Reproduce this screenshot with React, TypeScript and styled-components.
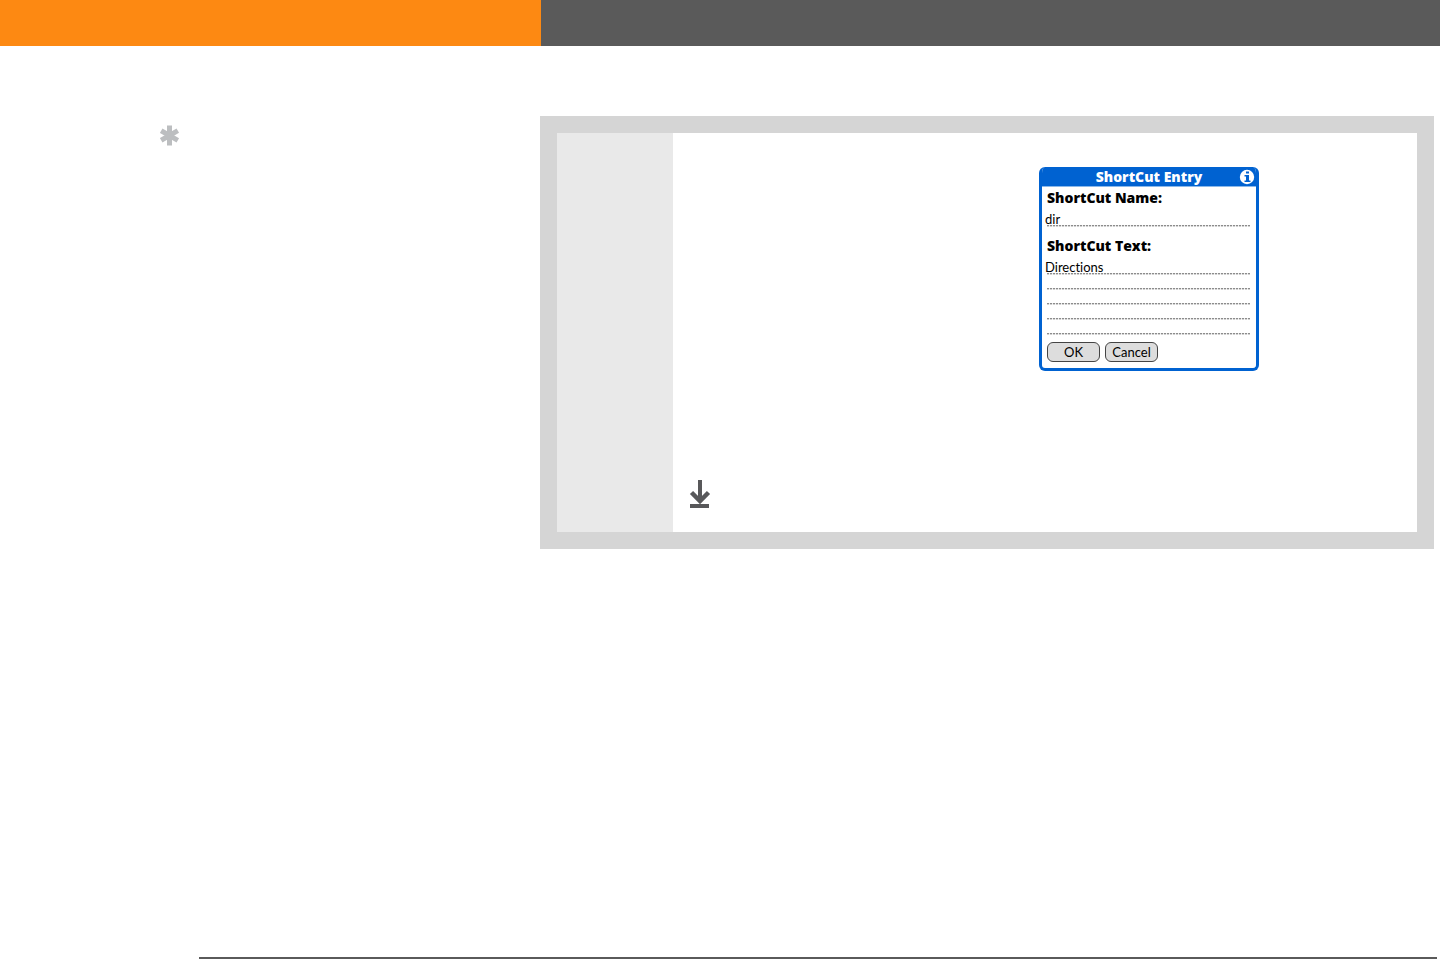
import React from "react";
import styled, { createGlobalStyle, css } from "styled-components";

const GlobalStyle = createGlobalStyle`
  *, *::before, *::after { box-sizing: border-box; }
  body { margin: 0; background: #fff; font-family: "Open Sans", "Noto Sans", sans-serif; }
`;

const Page = styled.div`
  display: flex;
  flex-direction: column;
  min-height: 100vh;
`;

const columns = css`
  display: grid;
  grid-template-columns: 541fr 899fr;
`;

const Banner = styled.header`
  ${columns}
  height: 46px;
`;

const BannerPart = styled.div<{ $color: string }>`
  background: ${(p) => p.$color};
`;

const Content = styled.main`
  ${columns}
  flex: 1;
  align-items: start;
  padding-top: 70px;
`;

const Margin = styled.aside`
  display: flex;
  justify-content: flex-end;
  padding: 9px 361px 0 0;
`;

const Panel = styled.section`
  display: grid;
  grid-template-columns: 116px 1fr;
  margin: 0 6px 0 -1px;
  border: 17px solid #d5d5d5;
`;

const StepColumn = styled.div`
  background: #e9e9e9;
`;

const StepBody = styled.div`
  display: flex;
  flex-direction: column;
  justify-content: space-between;
  min-height: 399px;
  padding: 34px 16px 24px;
`;

const Dialog = styled.form`
  align-self: flex-end;
  width: 220px;
  margin-right: 142px;
  border: 3px solid #0062d1;
  border-top-width: 0;
  border-radius: 6px;
  overflow: hidden;
  background: #fff;
  color: #000;
`;

const TitleBar = styled.div`
  display: grid;
  grid-template-columns: 16px 1fr 16px;
  align-items: center;
  height: 20px;
  padding: 0 1px;
  border-bottom: 1px solid #8ab8ea;
  background: #0062d1;
  color: #fff;
`;

const Title = styled.h1`
  margin: 0;
  font-size: 14px;
  font-weight: 800;
  line-height: 20px;
  text-align: center;
  white-space: nowrap;
`;

const InfoButton = styled.button`
  display: flex;
  width: 16px;
  height: 16px;
  padding: 0;
  border: 0;
  background: none;
`;

const Fields = styled.div`
  display: flex;
  flex-direction: column;
  padding: 2px 6px 6px 2px;
`;

const Label = styled.label`
  padding-left: 3px;
  font-size: 14px;
  font-weight: 800;
  line-height: 18px;
`;

const entry = css`
  display: block;
  width: 100%;
  padding: 0 0 0 1px;
  border: 0;
  outline: 0;
  border-radius: 0;
  resize: none;
  overflow: hidden;
  color: #000;
  font-family: Lato, sans-serif;
  font-size: 13px;
  font-variant-ligatures: none;
  background-image:
    linear-gradient(90deg, #fff 3px, transparent 3px),
    repeating-linear-gradient(#fff 0 13px, transparent 13px 14px, #fff9 14px 15px),
    repeating-linear-gradient(90deg, #8c8c8c 0 2px, #eee 2px 3px);
`;

const TextInput = styled.input`
  ${entry}
  height: 15px;
  margin: 5px 0 10px;
  line-height: 15px;
`;

const TextArea = styled.textarea`
  ${entry}
  height: 75px;
  margin: 5px 0 7px;
  line-height: 15px;
`;

const Actions = styled.div`
  display: flex;
  gap: 5px;
  padding-left: 3px;
`;

const ActionButton = styled.button`
  width: 53px;
  height: 20px;
  padding: 0;
  border: 1px solid #444;
  border-radius: 6px;
  background: #ddd;
  color: #000;
  font-family: Lato, sans-serif;
  font-size: 13px;
  line-height: 18px;
`;

const FooterRule = styled.hr`
  width: calc(100% - 202px);
  height: 2px;
  margin: 0 3px 0 199px;
  border: 0;
  background: #5a5a5a;
`;

export default function App() {
  return (
    <Page>
      <GlobalStyle />
      <Banner>
        <BannerPart $color="#fd8912" />
        <BannerPart $color="#5a5a5a" />
      </Banner>
      <Content>
        <Margin>
          <svg width="20" height="21" viewBox="0 0 20 21" stroke="#bcbec0" strokeWidth="5" aria-hidden="true">
            <path d="M9.5 0.5V20.5M1.2 5.7L17.8 15.3M17.8 5.7L1.2 15.3" />
          </svg>
        </Margin>
        <Panel>
          <StepColumn />
          <StepBody>
            <Dialog onSubmit={(e) => e.preventDefault()}>
              <TitleBar>
                <span />
                <Title>ShortCut Entry</Title>
                <InfoButton type="button" aria-label="Information">
                  <svg width="16" height="16" viewBox="0 0 16 16" aria-hidden="true">
                    <circle cx="8" cy="8" r="7.2" fill="#fff" />
                    <path d="M7 2.5h3v2H7zM5.5 6H10v5.5h1.5v1.5h-6v-1.5H7v-4H5.5z" fill="#0062d1" />
                  </svg>
                </InfoButton>
              </TitleBar>
              <Fields>
                <Label htmlFor="shortcut-name">ShortCut Name:</Label>
                <TextInput id="shortcut-name" defaultValue="dir" />
                <Label htmlFor="shortcut-text">ShortCut Text:</Label>
                <TextArea id="shortcut-text" defaultValue="Directions" />
                <Actions>
                  <ActionButton type="submit">OK</ActionButton>
                  <ActionButton type="button">Cancel</ActionButton>
                </Actions>
              </Fields>
            </Dialog>
            <svg width="22" height="28" viewBox="0 0 22 28" fill="none" stroke="#58585a" aria-hidden="true">
              <path d="M11 0V22" strokeWidth="4" />
              <path d="M2.5 12.5L11 21L19.5 12.5" strokeWidth="4.5" />
              <path d="M1 26H20" strokeWidth="4" />
            </svg>
          </StepBody>
        </Panel>
      </Content>
      <FooterRule />
    </Page>
  );
}
